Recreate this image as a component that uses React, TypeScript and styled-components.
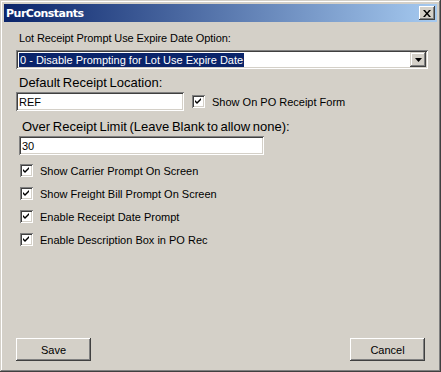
import React from 'react';
import styled, { createGlobalStyle } from 'styled-components';

const GlobalStyle = createGlobalStyle`
  html, body {
    margin: 0;
    padding: 0;
    background: #d4d0c8;
  }
  * {
    box-sizing: border-box;
  }
`;

const Window = styled.div`
  width: 441px;
  height: 372px;
  background: #d4d0c8;
  padding: 4px;
  display: flex;
  flex-direction: column;
  box-shadow:
    inset -1px -1px #404040,
    inset 1px 1px #d4d0c8,
    inset -2px -2px #808080,
    inset 2px 2px #ffffff;
  font-family: 'Liberation Sans', Arial, sans-serif;
  font-size: 11px;
  color: #000;
`;

const TitleBar = styled.div`
  height: 18px;
  display: flex;
  align-items: center;
  justify-content: space-between;
  padding: 0 2px 0 2px;
  background: linear-gradient(to right, #0a246a, #a6caf0);
`;

const TitleText = styled.span`
  font-family: 'DejaVu Sans', Tahoma, sans-serif;
  font-weight: bold;
  font-size: 11px;
  color: #fff;
  letter-spacing: -0.5px;
`;

const CloseButton = styled.div`
  width: 16px;
  height: 14px;
  background: #d4d0c8;
  display: flex;
  align-items: center;
  justify-content: center;
  box-shadow:
    inset -1px -1px #404040,
    inset 1px 1px #ffffff,
    inset -2px -2px #808080;
`;

const Body = styled.div`
  flex: 1;
  display: flex;
  flex-direction: column;
  padding: 10px 9px 7px 12px;
`;

const SmallLabel = styled.div`
  height: 13px;
  line-height: 13px;
  padding-left: 3px;
  letter-spacing: -0.1px;
`;

const BigLabel = styled.div<{ $indent?: number }>`
  font-size: 13px;
  word-spacing: -1px;
  height: 18px;
  line-height: 18px;
  padding-left: ${p => p.$indent ?? 3}px;
`;

const Sunken = styled.div<{ $width: number; $left?: number }>`
  width: ${p => p.$width}px;
  height: 19px;
  margin-left: ${p => p.$left ?? 0}px;
  background: #fff;
  display: flex;
  align-items: center;
  padding: 0 2px 0 3px;
  box-shadow:
    inset 1px 1px #808080,
    inset -1px -1px #ffffff,
    inset 2px 2px #404040,
    inset -2px -2px #d4d0c8;
  font-size: 11px;
`;

const SelectedText = styled.span`
  background: #0a246a;
  color: #fff;
  padding: 0 1px;
  line-height: 14px;
  flex: 0 0 auto;
`;

const Spacer = styled.div`
  flex: 1;
`;

const DropButton = styled.div`
  width: 16px;
  height: 15px;
  background: #d4d0c8;
  display: flex;
  align-items: center;
  justify-content: center;
  box-shadow:
    inset -1px -1px #404040,
    inset 1px 1px #d4d0c8,
    inset -2px -2px #808080,
    inset 2px 2px #ffffff;
`;

const Row = styled.div<{ $gap?: number }>`
  display: flex;
  align-items: center;
  gap: ${p => p.$gap ?? 8}px;
`;

const CheckList = styled.div`
  display: flex;
  flex-direction: column;
  gap: 10px;
  margin-top: 9px;
  padding-left: 4px;
`;

const CheckRow = styled.div`
  display: flex;
  align-items: center;
  gap: 7px;
  height: 13px;
`;

const Box = styled.div`
  width: 13px;
  height: 13px;
  background: #fff;
  display: flex;
  align-items: center;
  justify-content: center;
  box-shadow:
    inset 1px 1px #808080,
    inset -1px -1px #ffffff,
    inset 2px 2px #404040,
    inset -2px -2px #d4d0c8;
`;

const ButtonRow = styled.div`
  display: flex;
  justify-content: space-between;
  margin-right: 3px;
`;

const Button = styled.div`
  width: 75px;
  height: 23px;
  display: flex;
  align-items: center;
  justify-content: center;
  font-size: 11px;
  box-shadow:
    inset -1px -1px #404040,
    inset 1px 1px #ffffff,
    inset -2px -2px #808080,
    inset 2px 2px #d4d0c8;
`;

const Check = () => (
  <Box>
    <svg width="7" height="7" viewBox="0 0 7 7">
      <path d="M0 2 L2 4 L6 0 L6 2 L2 6 L0 4 Z" fill="#000" />
    </svg>
  </Box>
);

const CheckItem: React.FC<{ label: string }> = ({ label }) => (
  <CheckRow>
    <Check />
    <span>{label}</span>
  </CheckRow>
);

export default function App() {
  return (
    <>
      <GlobalStyle />
      <Window>
        <TitleBar>
          <TitleText>PurConstants</TitleText>
          <CloseButton>
            <svg width="8" height="7" viewBox="0 0 8 7">
              <path d="M0 0h2l2 2.5L6 0h2L5 3.5 8 7H6L4 4.5 2 7H0l3-3.5z" fill="#000" />
            </svg>
          </CloseButton>
        </TitleBar>
        <Body>
          <SmallLabel>Lot Receipt Prompt Use Expire Date Option:</SmallLabel>
          <Sunken $width={412} style={{ marginTop: 5 }}>
            <SelectedText>0 - Disable Prompting for Lot Use Expire Date</SelectedText>
            <Spacer />
            <DropButton>
              <svg width="7" height="4" viewBox="0 0 7 4">
                <path d="M0 0h7L3.5 4z" fill="#000" />
              </svg>
            </DropButton>
          </Sunken>
          <BigLabel style={{ marginTop: 5 }}>Default Receipt Location:</BigLabel>
          <Row $gap={8}>
            <Sunken $width={168}>REF</Sunken>
            <CheckRow>
              <Check />
              <span>Show On PO Receipt Form</span>
            </CheckRow>
          </Row>
          <BigLabel $indent={6} style={{ marginTop: 7 }}>
            Over Receipt Limit (Leave Blank to allow none):
          </BigLabel>
          <Sunken $width={245} $left={3}>30</Sunken>
          <CheckList>
            <CheckItem label="Show Carrier Prompt On Screen" />
            <CheckItem label="Show Freight Bill Prompt On Screen" />
            <CheckItem label="Enable Receipt Date Prompt" />
            <CheckItem label="Enable Description Box in PO Rec" />
          </CheckList>
          <Spacer />
          <ButtonRow>
            <Button>Save</Button>
            <Button>Cancel</Button>
          </ButtonRow>
        </Body>
      </Window>
    </>
  );
}
